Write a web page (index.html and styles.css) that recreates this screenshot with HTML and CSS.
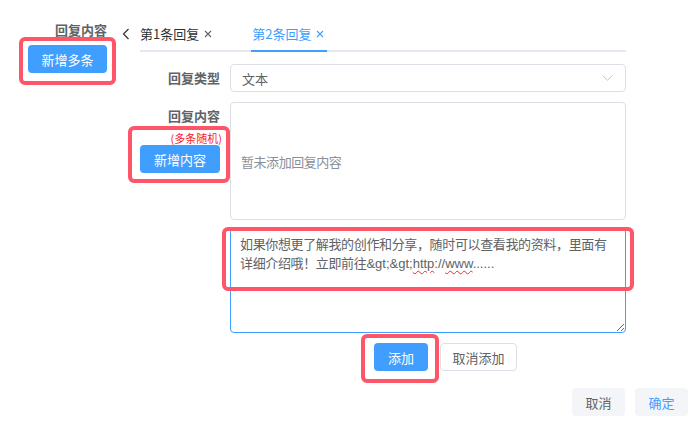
FILE: index.html
```html
<!DOCTYPE html>
<html lang="zh-CN">
<head>
<meta charset="utf-8">
<title>回复内容</title>
<link rel="stylesheet" href="styles.css">
</head>
<body>
<div class="page">
  <div class="left">
    <div class="label bold">回复内容</div>
    <button class="btn btn-primary btn-multi">新增多条</button>
  </div>
  <div class="main">
    <div class="tabs">
      <div class="tab-prev">
        <svg width="8" height="12" viewBox="0 0 8 12"><path d="M6.5 1 L1.5 6 L6.5 11" fill="none" stroke="#303133" stroke-width="1.2"/></svg>
      </div>
      <div class="tab-nav">
        <div class="tab">第1条回复
          <svg class="close" width="8" height="8" viewBox="0 0 8 8"><path d="M1 1 L7 7 M7 1 L1 7" stroke="#606266" stroke-width="1.1"/></svg>
        </div>
        <div class="tab active">第2条回复
          <svg class="close" width="8" height="8" viewBox="0 0 8 8"><path d="M1 1 L7 7 M7 1 L1 7" stroke="#409eff" stroke-width="1.1"/></svg>
        </div>
      </div>
    </div>
    <div class="form">
      <div class="row row-center">
        <div class="label-col"><div class="label bold">回复类型</div></div>
        <div class="select">
          <span>文本</span>
          <svg width="11" height="6" viewBox="0 0 11 6"><path d="M0.5 0.5 L5.5 5.2 L10.5 0.5" fill="none" stroke="#c0c4cc" stroke-width="1"/></svg>
        </div>
      </div>
      <div class="row row-content">
        <div class="label-col col-content">
          <div class="label bold">回复内容</div>
          <div class="hint">(多条随机)</div>
          <button class="btn btn-primary btn-add-content">新增内容</button>
        </div>
        <div class="content-box">暂未添加回复内容</div>
      </div>
      <div class="row row-ta">
        <div class="textarea"><span class="ta-line">如果你想更了解我的创作和分享，随时可以查看我的资料，里面有</span><br><span class="ta-line">详细介绍哦！立即前往<span class="latin">&amp;gt;&amp;gt;<span class="sp">http</span>://<span class="sp">www</span>......</span></span></div>
      </div>
      <div class="row actions">
        <button class="btn btn-primary btn-add">添加</button>
        <button class="btn btn-plain">取消添加</button>
      </div>
    </div>
  </div>
</div>
<div class="footer">
  <button class="btn btn-light">取消</button>
  <button class="btn btn-light btn-ok">确定</button>
</div>

<div class="hl hl-1"></div>
<div class="hl hl-2"></div>
<div class="hl hl-3"></div>
<div class="hl hl-4"></div>
</body>
</html>
```

FILE: styles.css
```css
* {
  box-sizing: border-box;
  margin: 0;
  padding: 0;
}

html, body {
  width: 696px;
  height: 428px;
}

body {
  margin: 0;
  background: #ffffff;
  font-family: "Noto Sans CJK SC", "Liberation Sans", sans-serif;
  font-size: 13px;
  color: #606266;
  position: relative;
  overflow: hidden;
}

.page {
  display: flex;
  padding-top: 13px;
}

.left {
  width: 107px;
  display: flex;
  flex-direction: column;
  align-items: flex-end;
  padding-top: 9px;
}

.label {
  line-height: 16px;
  color: #606266;
  white-space: nowrap;
}

.bold {
  font-weight: 700;
}

.btn {
  font-family: inherit;
  font-size: 13px;
  height: 28px;
  border-radius: 4px;
  border: none;
  cursor: pointer;
  line-height: 1;
}

.btn-primary {
  background: #409eff;
  color: #ffffff;
}

.btn-multi {
  width: 79px;
  margin-top: 7px;
}

.main {
  margin-left: 13px;
  width: 506px;
}

.tabs {
  display: flex;
  height: 39px;
}

.tab-prev {
  width: 20px;
  display: flex;
  align-items: center;
  padding-top: 3px;
  padding-left: 2px;
}

.tab-nav {
  flex: 1;
  display: flex;
  border-bottom: 2px solid #e4e7ed;
}

.tab {
  position: relative;
  display: flex;
  align-items: center;
  padding: 3px 20px 0 20px;
  color: #303133;
  white-space: nowrap;
}

.tab:first-child {
  padding-left: 0;
}

.tab:last-child {
  padding-right: 3px;
}

.tab .close {
  margin-left: 5px;
  margin-top: 1px;
}

.tab.active {
  color: #409eff;
}

.tab.active::after {
  content: "";
  position: absolute;
  left: 19px;
  right: 0;
  bottom: -2px;
  height: 2px;
  background: #409eff;
}

.form {
  margin-top: 12px;
}

.row {
  display: flex;
  gap: 10px;
}

.row-center {
  align-items: center;
}

.label-col {
  width: 100px;
  display: flex;
  flex-direction: column;
  align-items: flex-end;
}

.select {
  flex: 1;
  height: 28px;
  border: 1px solid #dcdfe6;
  border-radius: 4px;
  display: flex;
  align-items: center;
  justify-content: space-between;
  padding: 0 12px 0 11px;
  color: #606266;
}

.row-content {
  margin-top: 10px;
}

.col-content {
  padding-top: 6px;
}

.hint {
  color: #f5222d;
  font-size: 11px;
  line-height: 14px;
  margin-top: 7px;
  margin-right: -2px;
  white-space: nowrap;
}

.btn-add-content {
  width: 80px;
}

.content-box {
  flex: 1;
  height: 118px;
  border: 1px solid #dcdfe6;
  border-radius: 4px;
  display: flex;
  align-items: center;
  padding-left: 10px;
  color: #8a8f99;
  letter-spacing: -0.45px;
}

.row-ta {
  margin-top: 8px;
  padding-left: 110px;
}

.textarea {
  width: 396px;
  height: 105px;
  border: 1px solid #409eff;
  border-radius: 4px;
  padding: 5px 9px;
  line-height: 19px;
  color: #606266;
  letter-spacing: -0.36px;
  white-space: nowrap;
  resize: vertical;
  overflow: hidden;
}

.latin {
  font-family: "Liberation Sans", "Noto Sans CJK SC", sans-serif;
  letter-spacing: 0;
}

.sp {
  text-decoration: underline wavy #e0322e;
  text-decoration-thickness: 1px;
  text-underline-offset: 2px;
}

.actions {
  margin-top: 10px;
  padding-left: 254px;
  gap: 12px;
}

.btn-add {
  width: 54px;
}

.btn-plain {
  width: 77px;
  background: #ffffff;
  border: 1px solid #dcdfe6;
  color: #606266;
}

.footer {
  display: flex;
  justify-content: flex-end;
  gap: 10px;
  padding-right: 8px;
  margin-top: 17px;
}

.btn-light {
  width: 53px;
  background: #f4f5f8;
  color: #606266;
}

.btn-ok {
  color: #409eff;
}

.hl {
  position: absolute;
  border: 4px solid #fe5668;
  border-radius: 6px;
  pointer-events: none;
}

.hl-1 {
  left: 19px;
  top: 37px;
  width: 97px;
  height: 48px;
}

.hl-2 {
  left: 128px;
  top: 126px;
  width: 102px;
  height: 57px;
}

.hl-3 {
  left: 222px;
  top: 227px;
  width: 412px;
  height: 64px;
}

.hl-4 {
  left: 361px;
  top: 334px;
  width: 78px;
  height: 49px;
}
```
